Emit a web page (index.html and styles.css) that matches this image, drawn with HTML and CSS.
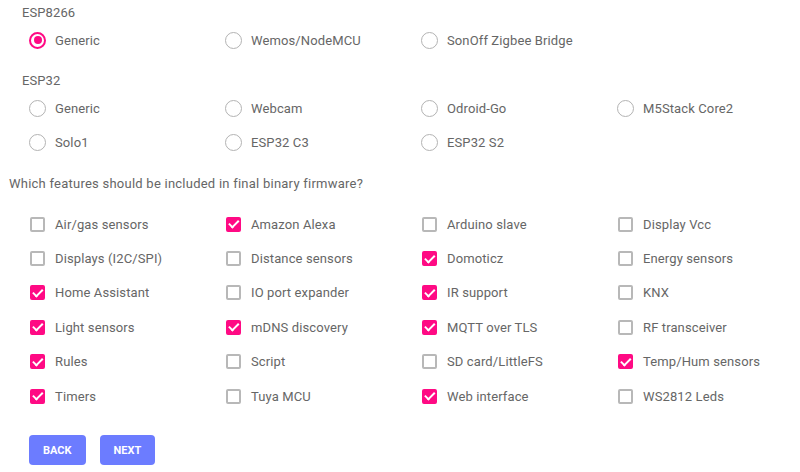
FILE: index.html
```html
<!DOCTYPE html>
<html>
<head>
<meta charset="utf-8">
<link rel="stylesheet" href="styles.css">
</head>
<body>
<div class="page">
  <div class="group g1">
    <div class="title">ESP8266</div>
    <div class="grid">
      <label class="opt"><span class="radio on"></span>Generic</label>
      <label class="opt"><span class="radio"></span>Wemos/NodeMCU</label>
      <label class="opt"><span class="radio"></span>SonOff Zigbee Bridge</label>
    </div>
  </div>
  <div class="group g2">
    <div class="title">ESP32</div>
    <div class="grid">
      <label class="opt"><span class="radio"></span>Generic</label>
      <label class="opt"><span class="radio"></span>Webcam</label>
      <label class="opt"><span class="radio"></span>Odroid-Go</label>
      <label class="opt"><span class="radio"></span>M5Stack Core2</label>
      <label class="opt"><span class="radio"></span>Solo1</label>
      <label class="opt"><span class="radio"></span>ESP32 C3</label>
      <label class="opt"><span class="radio"></span>ESP32 S2</label>
    </div>
  </div>
  <div class="question">Which features should be included in final binary firmware?</div>
  <div class="grid checks">
    <label class="opt"><span class="cb"></span>Air/gas sensors</label>
    <label class="opt"><span class="cb on"></span>Amazon Alexa</label>
    <label class="opt"><span class="cb"></span>Arduino slave</label>
    <label class="opt"><span class="cb"></span>Display Vcc</label>
    <label class="opt"><span class="cb"></span>Displays (I2C/SPI)</label>
    <label class="opt"><span class="cb"></span>Distance sensors</label>
    <label class="opt"><span class="cb on"></span>Domoticz</label>
    <label class="opt"><span class="cb"></span>Energy sensors</label>
    <label class="opt"><span class="cb on"></span>Home Assistant</label>
    <label class="opt"><span class="cb"></span>IO port expander</label>
    <label class="opt"><span class="cb on"></span>IR support</label>
    <label class="opt"><span class="cb"></span>KNX</label>
    <label class="opt"><span class="cb on"></span>Light sensors</label>
    <label class="opt"><span class="cb on"></span>mDNS discovery</label>
    <label class="opt"><span class="cb on"></span>MQTT over TLS</label>
    <label class="opt"><span class="cb"></span>RF transceiver</label>
    <label class="opt"><span class="cb on"></span>Rules</label>
    <label class="opt"><span class="cb"></span>Script</label>
    <label class="opt"><span class="cb"></span>SD card/LittleFS</label>
    <label class="opt"><span class="cb on"></span>Temp/Hum sensors</label>
    <label class="opt"><span class="cb on"></span>Timers</label>
    <label class="opt"><span class="cb"></span>Tuya MCU</label>
    <label class="opt"><span class="cb on"></span>Web interface</label>
    <label class="opt"><span class="cb"></span>WS2812 Leds</label>
  </div>
  <div class="buttons">
    <button class="btn back">Back</button>
    <button class="btn next">Next</button>
  </div>
</div>
</body>
</html>
```
FILE: styles.css
```css
html, body {
  margin: 0;
  padding: 0;
  background: #fff;
}
body {
  font-family: Roboto, "Liberation Sans", sans-serif;
  font-size: 13px;
  color: #666;
}
.page {
  display: flex;
  flex-direction: column;
  padding-left: 9px;
  padding-top: 4px;
}
.group {
  padding-left: 13px;
}
.g2 {
  margin-top: 15px;
}
.title {
  height: 18px;
  line-height: 18px;
  margin-bottom: 1px;
  letter-spacing: 0.1px;
}
.grid {
  display: grid;
  grid-template-columns: repeat(4, 196px);
  grid-auto-rows: 34px;
}
.checks {
  margin-left: 13px;
  margin-top: 14px;
  grid-auto-rows: 34.4px;
}
.opt {
  display: flex;
  align-items: center;
  padding-left: 7px;
  gap: 9px;
  letter-spacing: 0.12px;
}
.radio {
  box-sizing: border-box;
  width: 17px;
  height: 17px;
  border: 1.5px solid #b3b3b3;
  border-radius: 50%;
  position: relative;
  flex: none;
}
.radio.on {
  border: 2px solid #ff0a84;
}
.radio.on::after {
  content: "";
  position: absolute;
  left: 2.5px;
  top: 2.5px;
  width: 8px;
  height: 8px;
  border-radius: 50%;
  background: #ff0a84;
}
.cb {
  box-sizing: border-box;
  width: 15px;
  height: 15px;
  margin-left: 1px;
  margin-right: 1px;
  border: 2px solid #b8b8b8;
  border-radius: 2px;
  position: relative;
  flex: none;
}
.cb.on {
  background: #ff0a84;
  border-color: #ff0a84;
}
.cb.on::after {
  content: "";
  position: absolute;
  left: 3px;
  top: -0.5px;
  width: 4px;
  height: 7.5px;
  border-right: 2.2px solid #fff;
  border-bottom: 2.2px solid #fff;
  transform: rotate(45deg);
}
.question {
  margin-top: 16px;
  height: 18px;
  line-height: 18px;
  letter-spacing: 0.24px;
}
.buttons {
  display: flex;
  gap: 14px;
  margin-top: 22px;
  margin-left: 20px;
}
.btn {
  font-family: Roboto, "Liberation Sans", sans-serif;
  font-size: 11px;
  font-weight: 700;
  text-transform: uppercase;
  color: #fff;
  background: #6c7cff;
  border: none;
  border-radius: 4px;
  height: 30px;
  padding: 0 14px;
  letter-spacing: 0;
}
```
